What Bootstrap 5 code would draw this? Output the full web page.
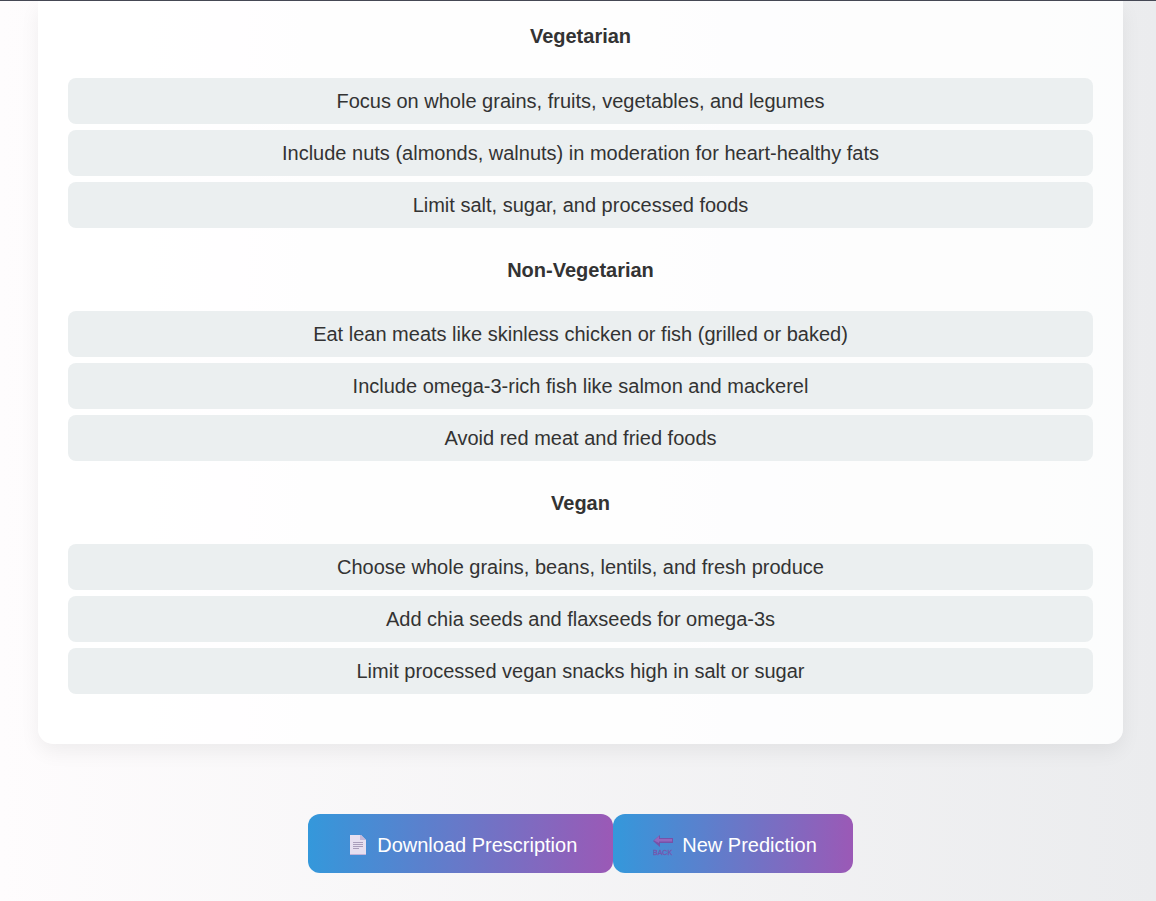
<!DOCTYPE html>
<html lang="en">
<head>
<meta charset="utf-8">
<meta name="viewport" content="width=device-width, initial-scale=1">
<title>Diet Recommendations</title>
<link href="https://cdn.jsdelivr.net/npm/bootstrap@5.3.0/dist/css/bootstrap.min.css" rel="stylesheet">
<style>
body {
  min-height: 100vh;
  border-top: 1px solid #454854;
  background: linear-gradient(90deg, #fefcfd, #ebecee);
  color: #333;
  font-family: Arial, "Liberation Sans", sans-serif;
  font-size: 20px;
  line-height: 26px;
}
.page-shell { padding: 0 33px 28px 38px; }
.diet-panel {
  padding: 23px 30px 50px;
  border-radius: 0 0 15px 15px;
  background: rgba(255, 255, 255, .85);
  box-shadow: 0 8px 20px rgba(0, 0, 0, .06);
}
.diet-title { margin: 0; padding-bottom: 30px; font-size: 20px; line-height: 24px; font-weight: 700; }
.diet-group + .diet-group { margin-top: 30px; }
.diet-group + .diet-group .diet-title { padding-bottom: 29px; }
.diet-list { gap: 6px; }
.diet-item { padding: 10px; border-radius: 8px; background: #ebeff0; }
.diet-actions { margin-top: 70px; }
.action-btn {
  padding: 18px 36px 15px 40px;
  border: 0;
  border-radius: 12px;
  background: linear-gradient(90deg, #3498db, #9b59b6);
  color: #fff;
  font-size: 20px;
  line-height: 26px;
  gap: 9px;
}
.action-btn:hover { color: #fff; }
</style>
</head>
<body>
<div class="page-shell">
  <main class="diet-panel text-center">
    <section class="diet-group">
      <h2 class="diet-title">Vegetarian</h2>
      <ul class="diet-list list-unstyled d-flex flex-column mb-0">
        <li class="diet-item">Focus on whole grains, fruits, vegetables, and legumes</li>
        <li class="diet-item">Include nuts (almonds, walnuts) in moderation for heart-healthy fats</li>
        <li class="diet-item">Limit salt, sugar, and processed foods</li>
      </ul>
    </section>
    <section class="diet-group">
      <h2 class="diet-title">Non-Vegetarian</h2>
      <ul class="diet-list list-unstyled d-flex flex-column mb-0">
        <li class="diet-item">Eat lean meats like skinless chicken or fish (grilled or baked)</li>
        <li class="diet-item">Include omega-3-rich fish like salmon and mackerel</li>
        <li class="diet-item">Avoid red meat and fried foods</li>
      </ul>
    </section>
    <section class="diet-group">
      <h2 class="diet-title">Vegan</h2>
      <ul class="diet-list list-unstyled d-flex flex-column mb-0">
        <li class="diet-item">Choose whole grains, beans, lentils, and fresh produce</li>
        <li class="diet-item">Add chia seeds and flaxseeds for omega-3s</li>
        <li class="diet-item">Limit processed vegan snacks high in salt or sugar</li>
      </ul>
    </section>
  </main>
  <div class="diet-actions d-flex flex-wrap justify-content-center">
    <button type="button" class="action-btn btn d-inline-flex align-items-center">
      <svg width="20" height="22" viewBox="0 0 20 22" aria-hidden="true">
        <path d="M2 1h11l5 5v15H2z" fill="#e6dff0"/>
        <path d="M2 20h16v1H2z" fill="#c3b3d8"/>
        <path d="M12 1h1l5 5h-6z" fill="#c4b8d8"/>
        <path d="M5 8.500h10M5 10.500h10M5 12.500h10M5 14.500h6" stroke="#a99dbb" stroke-width="1"/>
      </svg>
      Download Prescription
    </button>
    <button type="button" class="action-btn btn d-inline-flex align-items-center">
      <svg width="20" height="22" viewBox="0 0 20 22" aria-hidden="true">
        <path d="M0 7l7-6v3h13v5H7v4z" fill="#7652a8"/>
        <path d="M1 6.500L6 2v3h13v2.500H6V9z" fill="#9467bd"/>
        <text x="0" y="21" font-family="Arial, Liberation Sans, sans-serif" font-size="7" fill="#7656ae" stroke="#7656ae" stroke-width=".3">BACK</text>
      </svg>
      New Prediction
    </button>
  </div>
</div>
<script src="https://cdn.jsdelivr.net/npm/bootstrap@5.3.0/dist/js/bootstrap.bundle.min.js"></script>
</body>
</html>
